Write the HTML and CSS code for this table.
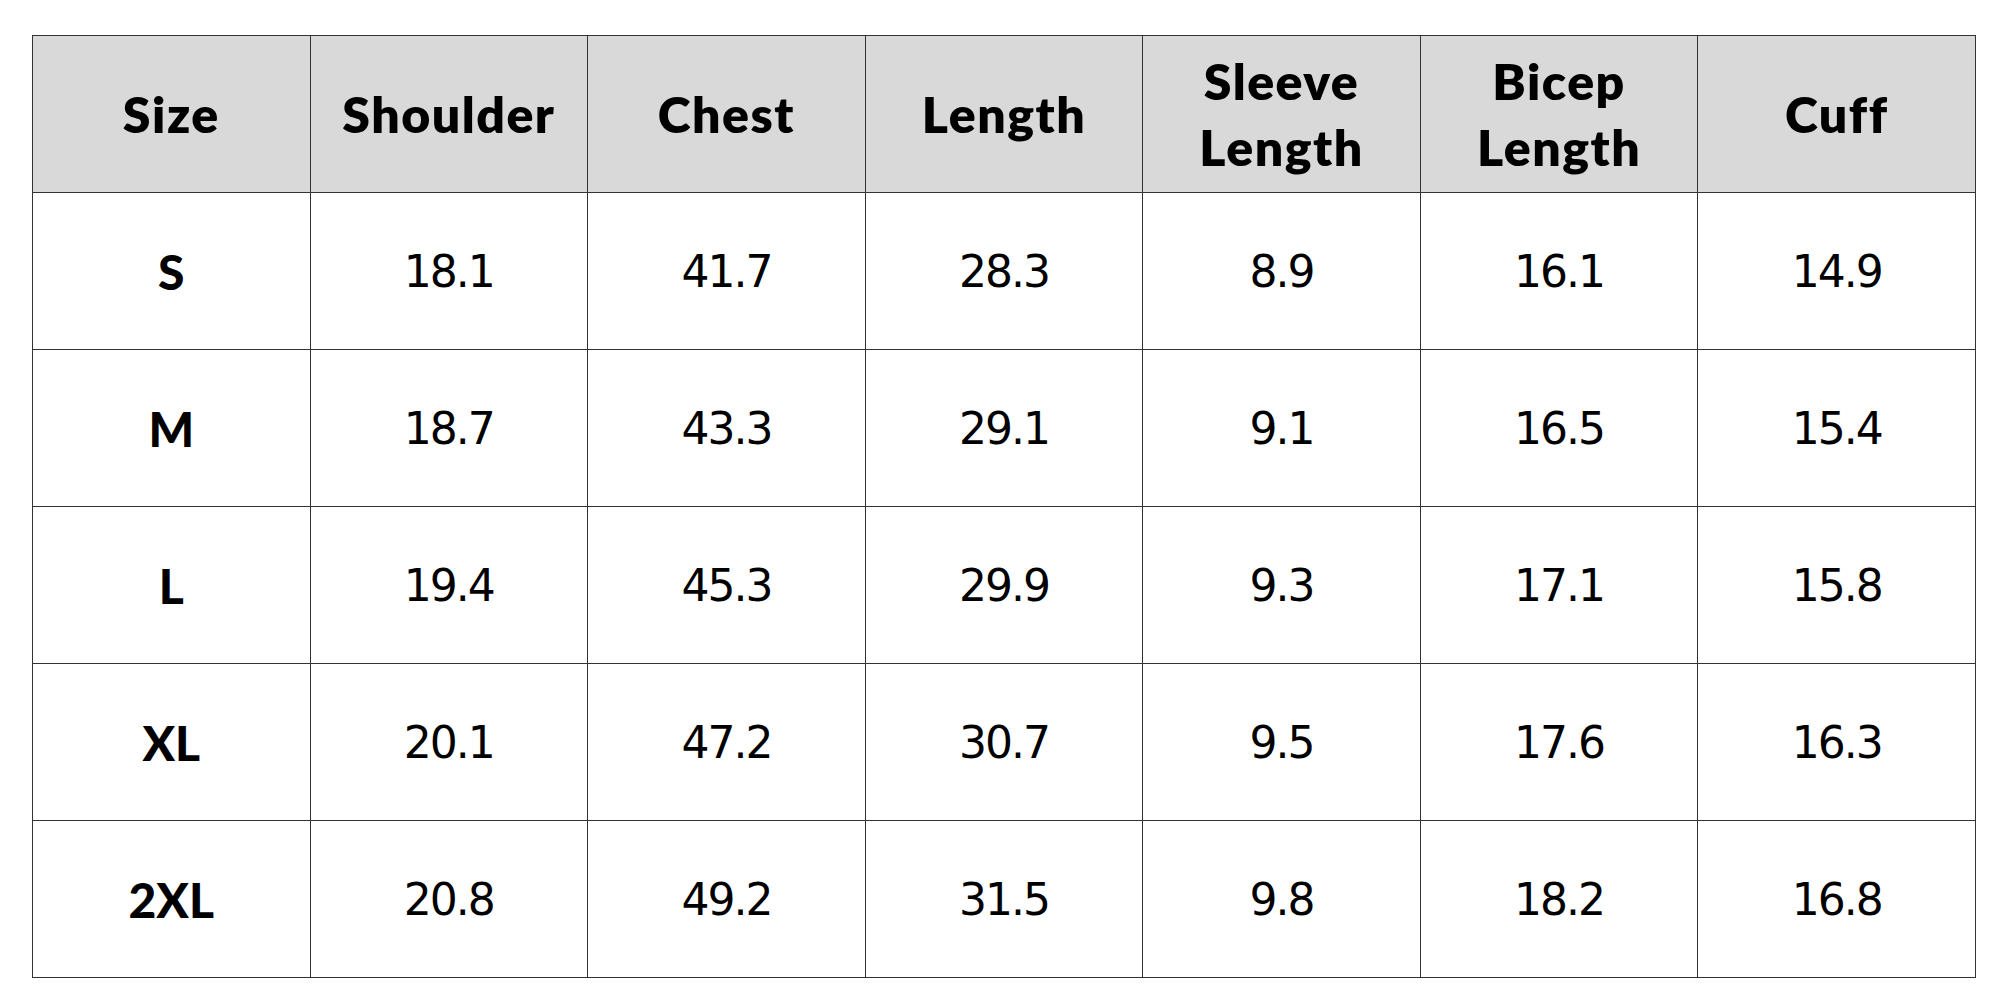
FILE: index.html
```html
<!DOCTYPE html>
<html>
<head>
<meta charset="utf-8">
<link rel="stylesheet" href="styles.css">
</head>
<body>
<table class="chart">
  <thead>
    <tr>
      <th>Size</th><th>Shoulder</th><th>Chest</th><th>Length</th><th>Sleeve<br>Length</th><th>Bicep<br>Length</th><th>Cuff</th>
    </tr>
  </thead>
  <tbody>
    <tr><td class="sz">S</td><td>18.1</td><td>41.7</td><td>28.3</td><td>8.9</td><td>16.1</td><td>14.9</td></tr>
    <tr><td class="sz">M</td><td>18.7</td><td>43.3</td><td>29.1</td><td>9.1</td><td>16.5</td><td>15.4</td></tr>
    <tr><td class="sz">L</td><td>19.4</td><td>45.3</td><td>29.9</td><td>9.3</td><td>17.1</td><td>15.8</td></tr>
    <tr><td class="sz">XL</td><td>20.1</td><td>47.2</td><td>30.7</td><td>9.5</td><td>17.6</td><td>16.3</td></tr>
    <tr><td class="sz">2XL</td><td>20.8</td><td>49.2</td><td>31.5</td><td>9.8</td><td>18.2</td><td>16.8</td></tr>
  </tbody>
</table>
</body>
</html>
```
FILE: styles.css
```css
html, body {
  margin: 0;
  padding: 0;
  background: #ffffff;
}
body {
  padding: 35px 0 0 32px;
}
.chart {
  border-collapse: collapse;
  table-layout: fixed;
  width: 1944px;
  border: 1.5px solid #6f6f6f;
  color: #000;
}
.chart th, .chart td {
  border: 1px solid #333;
  height: 156px;
  padding: 0;
  text-align: center;
  vertical-align: middle;
}
.chart th {
  background: #d9d9d9;
  font-family: Lato, "Open Sans", sans-serif;
  font-weight: 800;
  font-size: 50px;
  line-height: 66px;
  letter-spacing: 1.5px;
}
.chart td {
  font-family: "DejaVu Sans", sans-serif;
  font-weight: 400;
  font-size: 44px;
  letter-spacing: -2px;
}
.chart td.sz {
  font-family: Lato, sans-serif;
  font-weight: 900;
  font-size: 48px;
  letter-spacing: 0;
}
```
